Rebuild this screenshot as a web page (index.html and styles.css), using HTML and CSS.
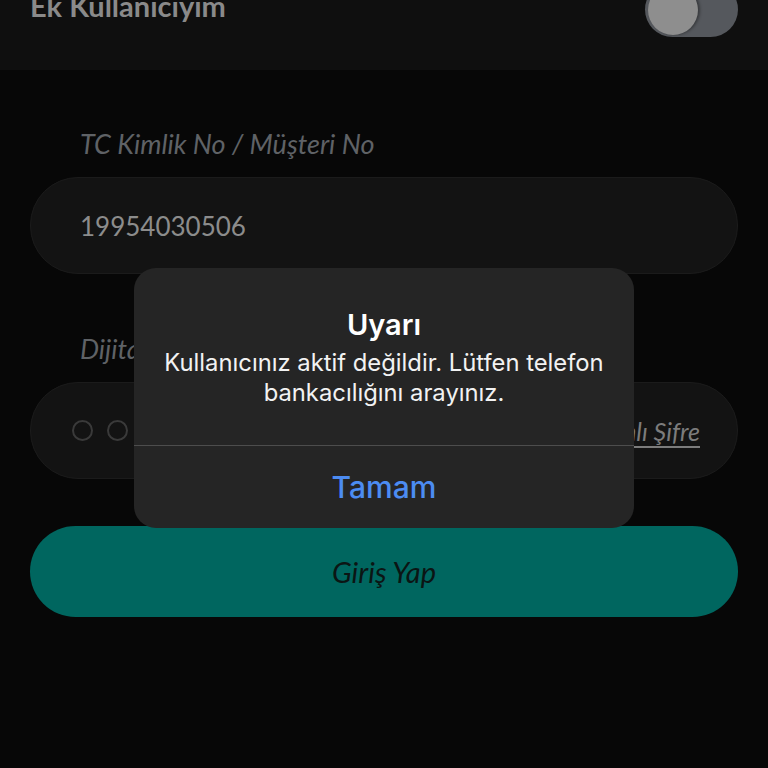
FILE: index.html
```html
<!DOCTYPE html>
<html lang="tr">
<head>
<meta charset="utf-8">
<link rel="stylesheet" href="styles.css">
</head>
<body>
<div class="screen">
  <header class="topbar">
    <span class="topbar-title">Ek Kullanıcıyım</span>
    <span class="toggle"><span class="knob"></span></span>
  </header>
  <main class="form">
    <div class="label">TC Kimlik No / Müşteri No</div>
    <div class="field"><span class="field-value">19954030506</span></div>
    <div class="label label-2">Dijital Şifre</div>
    <div class="field field-pass">
      <span class="dots"><span class="dot"></span><span class="dot"></span><span class="dot"></span><span class="dot"></span><span class="dot"></span><span class="dot"></span></span>
      <span class="link">Tek Kullanımlı Şifre</span>
    </div>
    <button class="submit">Giriş Yap</button>
  </main>
  <div class="alert">
    <div class="alert-body">
      <div class="alert-title">Uyarı</div>
      <div class="alert-msg">Kullanıcınız aktif değildir. Lütfen telefon bankacılığını arayınız.</div>
    </div>
    <div class="alert-action">Tamam</div>
  </div>
</div>
</body>
</html>
```
FILE: styles.css
```css
* { box-sizing: border-box; }
html, body { margin: 0; padding: 0; background: #070707; }
.screen {
  position: relative;
  width: 768px;
  height: 768px;
  overflow: hidden;
  background: #070707;
  font-family: "Lato", "Liberation Sans", sans-serif;
}
.topbar {
  height: 70px;
  background: #0f0f0f;
  display: flex;
  justify-content: space-between;
  align-items: flex-start;
  padding: 0 30px;
}
.topbar-title {
  margin-top: -14px;
  font-size: 29px;
  line-height: 40px;
  color: #8a8a8a;
  font-weight: 700;
}
.toggle {
  margin-top: -18px;
  width: 93px;
  height: 55px;
  border-radius: 28px;
  background: #55585d;
  display: flex;
  align-items: center;
  padding-left: 3px;
}
.knob {
  width: 50px;
  height: 50px;
  border-radius: 50%;
  background: #8e8e8e;
  box-shadow: 2px 0 3px rgba(0,0,0,0.35);
}
.form {
  display: flex;
  flex-direction: column;
  padding: 0 30px;
}
.label {
  margin-top: 57px;
  padding-left: 50px;
  font-style: italic;
  font-size: 27px;
  line-height: 34px;
  color: #5f6266;
}
.label-2 { margin-top: 58px; }
.field {
  margin-top: 16px;
  height: 97px;
  border-radius: 48px;
  background: #131313;
  border: 1px solid #1b1b1b;
  display: flex;
  align-items: center;
  padding: 0 37px 0 49px;
}
.field-value {
  font-size: 26px;
  color: #8c8c8c;
}
.field-pass { justify-content: space-between; padding-left: 41px; }
.dots { display: flex; gap: 14px; }
.dot {
  width: 21px;
  height: 21px;
  border-radius: 50%;
  border: 2px solid #3a3a3a;
}
.link {
  font-style: italic;
  font-size: 25px;
  color: #7c7c7c;
  text-decoration: underline;
  text-underline-offset: 5px;
}
.submit {
  margin-top: 47px;
  height: 91px;
  border: none;
  border-radius: 46px;
  background: #00665f;
  font-family: "Lato", "Liberation Sans", sans-serif;
  font-style: italic;
  font-size: 29px;
  color: #0b1514;
}
.alert {
  position: absolute;
  left: 134px;
  top: 268px;
  width: 500px;
  height: 260px;
  border-radius: 22px;
  background: #252525;
  display: flex;
  flex-direction: column;
  font-family: "Inter", "Roboto", sans-serif;
  text-align: center;
}
.alert-body {
  height: 178px;
  border-bottom: 1px solid #4d4d4d;
  padding: 39px 12px 0;
}
.alert-title {
  font-size: 29px;
  font-weight: 600;
  color: #ffffff;
  line-height: 36px;
}
.alert-msg {
  margin-top: 5px;
  font-size: 23.8px;
  line-height: 30px;
  color: #f2f2f2;
}
.alert-action {
  flex: 1;
  display: flex;
  align-items: center;
  justify-content: center;
  font-size: 30px;
  font-weight: 500;
  color: #4c8cf2;
}
```
